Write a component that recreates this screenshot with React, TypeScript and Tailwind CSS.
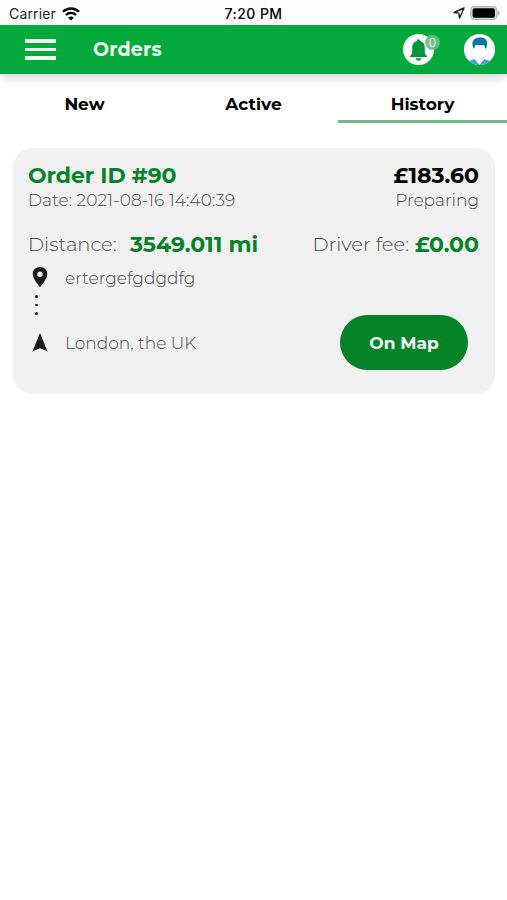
import clsx from "clsx";

const tabs = [
  { id: "new", label: "New" },
  { id: "active", label: "Active" },
  { id: "history", label: "History" },
];

function StatusBar() {
  return (
    <div className="flex h-[25px] items-center justify-between bg-[#fdfdfd] pr-[7px] pl-[9px] font-['Inter',sans-serif] text-[14px] text-[#222]">
      <div className="flex flex-1 items-center gap-[6px] pt-[2px]">
        <span className="text-[14px] tracking-[0.15px]">Carrier</span>
        <svg width="18" height="14" viewBox="0 0 18 14" fill="none" stroke="#000">
          <path d="M1 4.8C5.5.4 12.5.4 17 4.8" strokeWidth="2.3" />
          <path d="M3.9 8C6.8 5.2 11.2 5.2 14.1 8" strokeWidth="2.2" />
          <path d="M9 13.6 6.2 10.7C7.8 9.2 10.2 9.2 11.8 10.7Z" fill="#000" stroke="none" />
        </svg>
      </div>
      <span className="pt-[2px] pr-[2px] font-medium tracking-[0.45px] text-black">7:20 PM</span>
      <div className="flex flex-1 items-center justify-end gap-[5px] pt-[1px]">
        <svg width="12" height="12" viewBox="0 0 12 12" fill="none" stroke="#222" strokeWidth="1.4" strokeLinejoin="round">
          <path d="M11 1 1 5.5 5.8 6.1 6.6 11Z" />
        </svg>
        <svg width="30" height="14" viewBox="0 0 30 14">
          <rect x="0.6" y="0.6" width="26.4" height="12.8" rx="3.8" fill="#ddd" stroke="#b5b5b5" strokeWidth="1.2" />
          <rect x="2.6" y="2.2" width="22.4" height="9.6" rx="2" fill="#000" />
          <path d="M28.2 5v4.4C29.800 8.800 29.800 5.600 28.200 5Z" fill="#999" />
        </svg>
      </div>
    </div>
  );
}

function Header() {
  return (
    <header className="relative flex h-[49px] items-center bg-[#03aa3b] pr-3 pl-[25px] shadow-[0_6px_8px_-1px_rgba(0,0,0,0.13)]">
      <button type="button" aria-label="Menu" className="flex w-[31px] flex-col gap-[5px]">
        <span className="h-[3.5px] bg-[#effff3]" />
        <span className="h-[3.5px] bg-[#effff3]" />
        <span className="h-[3.5px] bg-[#effff3]" />
      </button>
      <h1 className="ml-[37px] flex-1 pt-[2px] text-[19px] font-bold tracking-[0.2px] text-[#f2fff5]">Orders</h1>

      <div className="relative mr-[30px] size-[31px]">
        <svg width="31" height="31" viewBox="0 0 31 31">
          <circle cx="15.5" cy="15.5" r="15.5" fill="#fff" />
          <path
            d="M15.5 5.200c-.9 0-1.500.6-1.500 1.300v.4c-3.100.7-4.800 3.200-4.800 6.300v4.800c0 1.600-.9 3-2.200 4.100v1h17v-1c-1.300-1.100-2.200-2.500-2.200-4.100v-4.800c0-3.100-1.700-5.600-4.800-6.300v-.4c0-.7-.6-1.300-1.500-1.300Z"
            fill="#05983a"
          />
          <path d="M12.700 24.300h5.600c-.2 1.500-1.300 2.400-2.800 2.400s-2.600-.9-2.800-2.400Z" fill="#05983a" />
        </svg>
        <span className="absolute top-[1px] -right-[6px] flex size-[15px] items-center justify-center rounded-full bg-[#6abf86]/90 font-['Inter',sans-serif] text-[12px] leading-none font-light text-white">
          0
        </span>
      </div>

      <svg width="31" height="31" viewBox="0 0 31 31">
        <defs>
          <clipPath id="avatar">
            <circle cx="15.5" cy="15.5" r="15.5" />
          </clipPath>
        </defs>
        <g clipPath="url(#avatar)">
          <rect width="31" height="31" fill="#fff" />
          <path d="M3 28.500c2-2 4.500-2.500 7.500-3.500l5 5 5-5c3 1 5.500 1.500 7.500 3.500v4H3Z" fill="#4a9fdc" />
          <path d="M10.800 25 15.500 31l4.700-6-4.700 1Z" fill="#f6fbff" />
          <path d="M16.500 24.500l3.500-2.500-.3 2.500Z" fill="#f6d5cf" />
          <path
            d="M9.300 14C7.800 10.500 8.100 6.500 11 4.800c2.700-1.500 7.900-1.800 10.300.1 2.300 1.900 2.200 6 .9 9.100l-1 .8c-.2-1.600-.4-2.900-1.400-3.900-2.500.7-5.700.5-7.800-.2-1.100 1-1.300 2.100-1.600 4.100Z"
            fill="#0873ad"
          />
        </g>
      </svg>
    </header>
  );
}

function OrderCard() {
  return (
    <article className="mt-[25px] mr-3 ml-[13px] h-[246px] rounded-[20px] bg-[#f1f1f1] pt-[15px] pr-4 pl-[15px] text-[#484848]">
      <div className="flex h-[25px] items-center justify-between text-[22px] font-bold">
        <h2 className="tracking-[-0.05px] text-[#068329]">Order ID #90</h2>
        <span className="text-black">£183.60</span>
      </div>
      <div className="flex h-[25px] items-center justify-between text-[17px] font-light">
        <span className="tracking-[0.05px]">Date: 2021-08-16 14:40:39</span>
        <span>Preparing</span>
      </div>

      <div className="mt-[19px] flex h-[25px] items-center text-[19.5px]">
        <span className="w-[102px] font-light">Distance:</span>
        <span className="text-[22px] font-bold text-[#068329]">3549.011 mi</span>
        <span className="ml-auto font-light">Driver fee:</span>
        <span className="ml-[6px] text-[22px] font-bold text-[#068329]">£0.00</span>
      </div>

      <div className="mt-[9px] flex justify-between">
        <div className="text-[17px] font-light">
          <div className="flex h-[25px] items-center">
            <svg className="mr-[17px] -mt-[3px] ml-1" width="16" height="20" viewBox="0 0 16 20">
              <path
                d="M8 0C3.800 0 .7 3.100.7 7.200.7 12.200 8 20 8 20s7.300-7.800 7.300-12.800C15.300 3.100 12.200 0 8 0Zm0 9.900a2.700 2.700 0 1 1 0-5.400 2.700 2.700 0 0 1 0 5.400Z"
                fill="#1b1b1b"
              />
            </svg>
            <span>ertergefgdgdfg</span>
          </div>
          <div className="ml-[7px] flex h-10 flex-col gap-[6px] pt-[4px]">
            <span className="size-[2.5px] rounded-full bg-[#222]" />
            <span className="size-[2.5px] rounded-full bg-[#222]" />
            <span className="size-[2.5px] rounded-full bg-[#222]" />
          </div>
          <div className="flex h-[25px] items-center">
            <svg className="mr-[17px] -mt-[2px] ml-1" width="16" height="19" viewBox="0 0 16 19">
              <path d="M8 0 .4 18.500 8 15.300l7.600 3.200Z" fill="#1b1b1b" />
            </svg>
            <span>London, the UK</span>
          </div>
        </div>
        <button
          type="button"
          className="mt-[49px] mr-[11px] h-[55px] w-[128px] rounded-full bg-[#068329] pt-[2px] text-[17px] font-bold text-[#f2fff5]"
        >
          On Map
        </button>
      </div>
    </article>
  );
}

export default function App() {
  const active = "history";

  return (
    <main className="min-h-screen w-full bg-white font-['Montserrat','Inter',sans-serif]">
      <StatusBar />
      <Header />
      <nav className="grid h-[49px] grid-cols-3">
        {tabs.map((tab) => (
          <button
            key={tab.id}
            type="button"
            className={clsx(
              "border-b-[3px] pt-[19px] pb-[4px] text-[17px] leading-[23px] font-bold text-black",
              tab.id === active ? "border-[#70bd89]" : "border-transparent",
            )}
          >
            {tab.label}
          </button>
        ))}
      </nav>
      <OrderCard />
    </main>
  );
}
